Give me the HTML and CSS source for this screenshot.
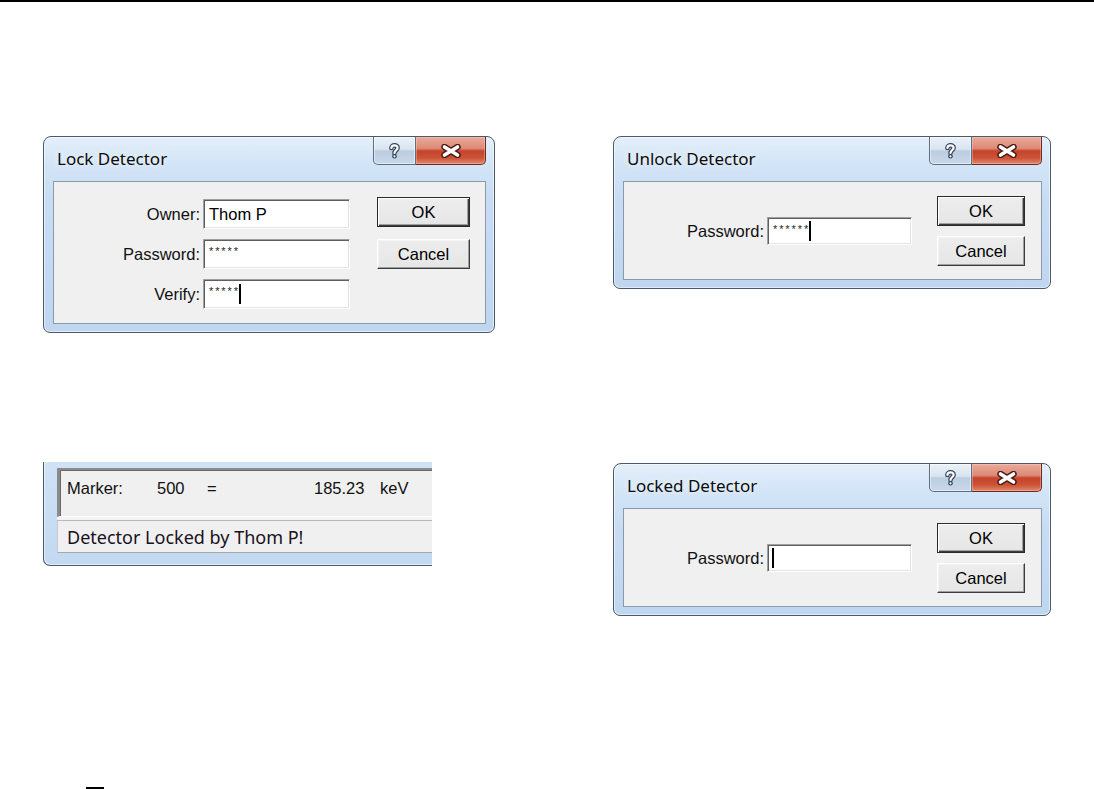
FILE: index.html
```html
<!DOCTYPE html>
<html>
<head>
<meta charset="utf-8">
<title>Detector lock dialogs</title>
<link rel="stylesheet" href="styles.css">
</head>
<body>
<div class="page">
  <div class="top-rule"></div>
  <main class="sheet">
    <section class="win win-lock">
      <header class="titlebar">
        <span class="title">Lock Detector</span>
        <div class="caption">
          <span class="cap-btn cap-help"><svg width="13" height="16" viewBox="0 0 13 16"><path d="M3.4 5C3.4 1.6 9.6 1.4 9.6 4.8C9.6 7.2 6.5 7.3 6.5 10" fill="none" stroke="#34455b" stroke-width="4.6" stroke-linecap="round"/><circle cx="6.5" cy="13.3" r="2.3" fill="#34455b"/><path d="M3.4 5C3.4 1.6 9.6 1.4 9.6 4.8C9.6 7.2 6.5 7.3 6.5 10" fill="none" stroke="#fff" stroke-width="2.2" stroke-linecap="round"/><circle cx="6.5" cy="13.3" r="1.1" fill="#fff"/></svg></span>
          <span class="cap-btn cap-close"><svg width="20" height="14" viewBox="0 0 20 14"><path d="M3.5 3L16.5 11M16.5 3L3.5 11" stroke="#4a1a12" stroke-width="6.4" stroke-linecap="round"/><path d="M3.5 3L16.5 11M16.5 3L3.5 11" stroke="#fff" stroke-width="3.6" stroke-linecap="round"/></svg></span>
        </div>
      </header>
      <div class="client client-lock">
        <div class="form-lock">
          <span class="lbl">Owner:</span>
          <div class="field field-lock">Thom P</div>
          <span class="lbl">Password:</span>
          <div class="field field-lock"><span class="mask">*****</span></div>
          <span class="lbl">Verify:</span>
          <div class="field field-lock"><span class="mask">*****</span><span class="caret"></span></div>
        </div>
        <div class="btns btns-lock">
          <div class="btn btn-default btn-lock">OK</div>
          <div class="btn btn-lock">Cancel</div>
        </div>
      </div>
    </section>

    <section class="win win-small">
      <header class="titlebar">
        <span class="title">Unlock Detector</span>
        <div class="caption">
          <span class="cap-btn cap-help"><svg width="13" height="16" viewBox="0 0 13 16"><path d="M3.4 5C3.4 1.6 9.6 1.4 9.6 4.8C9.6 7.2 6.5 7.3 6.5 10" fill="none" stroke="#34455b" stroke-width="4.6" stroke-linecap="round"/><circle cx="6.5" cy="13.3" r="2.3" fill="#34455b"/><path d="M3.4 5C3.4 1.6 9.6 1.4 9.6 4.8C9.6 7.2 6.5 7.3 6.5 10" fill="none" stroke="#fff" stroke-width="2.2" stroke-linecap="round"/><circle cx="6.5" cy="13.3" r="1.1" fill="#fff"/></svg></span>
          <span class="cap-btn cap-close"><svg width="20" height="14" viewBox="0 0 20 14"><path d="M3.5 3L16.5 11M16.5 3L3.5 11" stroke="#4a1a12" stroke-width="6.4" stroke-linecap="round"/><path d="M3.5 3L16.5 11M16.5 3L3.5 11" stroke="#fff" stroke-width="3.6" stroke-linecap="round"/></svg></span>
        </div>
      </header>
      <div class="client client-small">
        <div class="row-small">
          <span class="lbl lbl-small">Password:</span>
          <div class="field field-small"><span class="mask">******</span><span class="caret"></span></div>
        </div>
        <div class="btns btns-small">
          <div class="btn btn-default btn-small">OK</div>
          <div class="btn btn-small">Cancel</div>
        </div>
      </div>
    </section>

    <section class="frag">
      <div class="frag-inner">
        <div class="marker-panel">
          <span>Marker:</span><span>500</span><span>=</span><span>185.23</span><span>keV</span>
        </div>
        <div class="statusbar">Detector Locked by Thom P!</div>
      </div>
    </section>

    <section class="win win-small win-locked">
      <header class="titlebar">
        <span class="title">Locked Detector</span>
        <div class="caption">
          <span class="cap-btn cap-help"><svg width="13" height="16" viewBox="0 0 13 16"><path d="M3.4 5C3.4 1.6 9.6 1.4 9.6 4.8C9.6 7.2 6.5 7.3 6.5 10" fill="none" stroke="#34455b" stroke-width="4.6" stroke-linecap="round"/><circle cx="6.5" cy="13.3" r="2.3" fill="#34455b"/><path d="M3.4 5C3.4 1.6 9.6 1.4 9.6 4.8C9.6 7.2 6.5 7.3 6.5 10" fill="none" stroke="#fff" stroke-width="2.2" stroke-linecap="round"/><circle cx="6.5" cy="13.3" r="1.1" fill="#fff"/></svg></span>
          <span class="cap-btn cap-close"><svg width="20" height="14" viewBox="0 0 20 14"><path d="M3.5 3L16.5 11M16.5 3L3.5 11" stroke="#4a1a12" stroke-width="6.4" stroke-linecap="round"/><path d="M3.5 3L16.5 11M16.5 3L3.5 11" stroke="#fff" stroke-width="3.6" stroke-linecap="round"/></svg></span>
        </div>
      </header>
      <div class="client client-small">
        <div class="row-small">
          <span class="lbl lbl-small">Password:</span>
          <div class="field field-small"><span class="caret caret-empty"></span></div>
        </div>
        <div class="btns btns-small">
          <div class="btn btn-default btn-small">OK</div>
          <div class="btn btn-small">Cancel</div>
        </div>
      </div>
    </section>
  </main>
  <div class="foot-mark"></div>
</div>
</body>
</html>
```

FILE: styles.css
```css
* { box-sizing: border-box; }

body {
  margin: 0;
  background: #ffffff;
  font-family: "Liberation Sans", Arial, sans-serif;
  color: #000;
}

.page {
  width: 1094px;
  height: 789px;
  display: flex;
  flex-direction: column;
  overflow: hidden;
}

.top-rule {
  height: 2px;
  background: #000;
  flex: none;
}

.sheet {
  display: grid;
  grid-template-columns: 452px 438px;
  column-gap: 118px;
  row-gap: 129px;
  margin: 134px 0 0 43px;
  align-items: start;
}

/* ---------- window frame ---------- */
.win {
  border: 1px solid #4b596a;
  border-radius: 8px 8px 7px 7px;
  background: linear-gradient(180deg, #e4effa 0px, #d3e5f7 26px, #c8ddf4 60px, #bfd6f0 100%);
  box-shadow: inset 0 0 0 1px rgba(255, 255, 255, 0.55);
  padding: 0 8px 8px 9px;
  display: flex;
  flex-direction: column;
}

.win-locked { margin-top: 1px; }

.titlebar {
  height: 44px;
  display: flex;
  justify-content: space-between;
  align-items: flex-start;
}

.title {
  align-self: center;
  margin-left: 4px;
  font-family: "Noto Sans", "Open Sans", sans-serif;
  font-size: 17px;
  line-height: 22px;
  color: #0c0c0c;
  text-shadow: 0 0 6px rgba(255, 255, 255, 0.9);
}

.caption {
  display: flex;
  height: 28px;
}

.cap-btn {
  height: 28px;
  display: flex;
  align-items: center;
  justify-content: center;
}

.cap-help {
  width: 43px;
  border: 1px solid #5c6e85;
  border-top: none;
  border-radius: 0 0 0 5px;
  background: linear-gradient(180deg, #eaf1f8 0%, #d9e4f0 45%, #bccde0 52%, #c9d8e9 100%);
  box-shadow: inset 0 0 0 1px rgba(255, 255, 255, 0.5);
}

.cap-close {
  width: 70px;
  border: 1px solid #6e2a1f;
  border-top: none;
  border-left: none;
  border-radius: 0 0 5px 0;
  background: linear-gradient(180deg, #e9aa9b 0%, #dc8a77 42%, #c5432a 52%, #cc5436 78%, #e08a6e 100%);
  box-shadow: inset 0 0 0 1px rgba(255, 220, 210, 0.35);
}

/* ---------- client area ---------- */
.client {
  background: #f0f0f0;
  border: 1px solid #8c99a9;
  display: flex;
  align-items: flex-start;
}

.client-lock { height: 143px; }
.client-small { height: 99px; }

.lbl {
  font-size: 16.5px;
  text-align: right;
  align-self: center;
  color: #111;
}

.field {
  background: #fff;
  border-style: solid;
  border-width: 1px;
  border-color: #a0a0a0 #ffffff #ffffff #a0a0a0;
  box-shadow: inset 1px 1px 0 #5f5f5f, inset -1px -1px 0 #e3e3e3;
  display: flex;
  align-items: center;
  padding-left: 5px;
  font-size: 16.5px;
  color: #000;
}

.mask {
  align-self: flex-start;
  margin-top: 6px;
  font-size: 11px;
  line-height: 11px;
  letter-spacing: 1.9px;
  color: #2a2a2a;
}

.caret {
  display: inline-block;
  width: 2px;
  height: 20px;
  background: #000;
  margin-left: -1px;
}

/* Lock dialog form */
.form-lock {
  margin-top: 17px;
  display: grid;
  grid-template-columns: 146px 147px;
  grid-auto-rows: 30px;
  column-gap: 3px;
  row-gap: 10px;
}

.field-lock { height: 30px; }

.btns {
  display: flex;
  flex-direction: column;
}

.btns-lock {
  margin: 15px 0 0 27px;
  gap: 12px;
}

.btn {
  display: flex;
  align-items: center;
  justify-content: center;
  background: linear-gradient(180deg, #ededed 0%, #e6e6e6 100%);
  border: 1px solid;
  border-color: #ffffff #3c3c3c #3c3c3c #ffffff;
  box-shadow: inset -1px -1px 0 #a0a0a0, inset 1px 1px 0 #f4f4f4;
  font-size: 16.5px;
  color: #000;
}

.btn-default {
  border-color: #2a2a2a;
  box-shadow: inset 1px 1px 0 #ffffff, inset -1px -1px 0 #3c3c3c, inset -2px -2px 0 #a0a0a0;
}

.btn-lock { width: 93px; height: 30px; }

/* Unlock / Locked dialogs */
.row-small {
  margin-top: 35px;
  display: flex;
  gap: 3px;
}

.lbl-small { width: 140px; }

.field-small { width: 145px; height: 28px; }

.btns-small {
  margin: 14px 0 0 25px;
  gap: 10px;
}

.btn-small { width: 88px; height: 30px; }

/* ---------- status fragment ---------- */
.frag {
  width: 389px;
  height: 104px;
  border-left: 1px solid #4b596a;
  border-bottom: 1px solid #4b596a;
  border-bottom-left-radius: 7px;
  background: linear-gradient(180deg, #cfe2f6 0%, #c2d9f1 100%);
  box-shadow: inset 1px -1px 0 rgba(255, 255, 255, 0.5);
  padding: 6px 0 12px 13px;
}

.frag-inner {
  height: 85px;
  background: #f3f3f3;
  display: flex;
  flex-direction: column;
  gap: 3px;
}

.marker-panel {
  height: 49px;
  border-top: 2px solid #8a8a8a;
  border-left: 3px solid #8a8a8a;
  border-bottom: 1px solid #ffffff;
  box-shadow: inset 1px 1px 0 #6a6a6a;
  background: #f0f0f0;
  padding: 7px 0 0 7px;
  display: grid;
  grid-template-columns: 90px 50px 107px 66px auto;
  align-content: start;
  font-size: 16.5px;
  line-height: 22px;
  color: #111;
}

.statusbar {
  height: 33px;
  border-top: 1px solid #b8b8b8;
  border-left: 1px solid #c8c8c8;
  border-bottom: 1px solid #a8a8a8;
  background: #f0f0f0;
  padding-left: 9px;
  display: flex;
  align-items: center;
  font-family: "Noto Sans", "Open Sans", sans-serif;
  font-size: 18px;
  color: #1a1020;
}

.foot-mark {
  margin: auto 0 0 86px;
  width: 18px;
  height: 2px;
  background: #000;
  flex: none;
}
```
